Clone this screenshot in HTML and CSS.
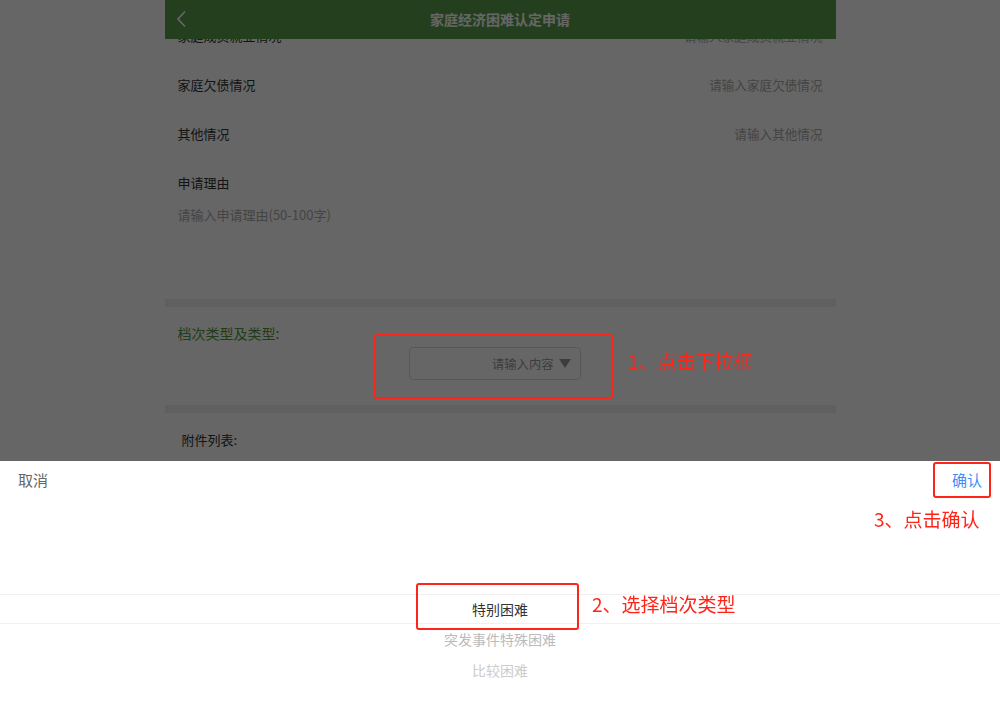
FILE: index.html
```html
<!DOCTYPE html>
<html lang="zh-CN">
<head>
  <meta charset="UTF-8" />
  <meta name="viewport" content="width=device-width, initial-scale=1.0">
  <title>家庭经济困难认定申请</title>
  <link rel="stylesheet" href="styles.css">
</head>
<body>
  <div class="page">
    <!-- 顶部导航 -->
    <div class="nav-bar">
      <svg class="nav-back" width="12" height="18" viewBox="0 0 12 18">
        <polyline points="9,1.5 2,9 9,16.5" fill="none" stroke="#fff" stroke-width="1.6" />
      </svg>
      <span class="nav-title">家庭经济困难认定申请</span>
    </div>

    <!-- 表单内容 (已滚动) -->
    <div class="form">
      <div class="form-row">
        <span class="form-label">家庭成员就业情况</span>
        <span class="form-input">请输入家庭成员就业情况</span>
      </div>
      <div class="form-row">
        <span class="form-label">家庭欠债情况</span>
        <span class="form-input">请输入家庭欠债情况</span>
      </div>
      <div class="form-row">
        <span class="form-label">其他情况</span>
        <span class="form-input">请输入其他情况</span>
      </div>
      <div class="form-area">
        <span class="form-label">申请理由</span>
        <div class="form-textarea">请输入申请理由(50-100字)</div>
      </div>

      <div class="divider"></div>

      <div class="level-section">
        <div class="level-title">档次类型及类型:</div>
        <div class="level-select">
          <div class="select-box">
            <span>请输入内容</span>
            <span class="select-arrow"></span>
          </div>
        </div>
      </div>

      <div class="divider"></div>

      <div class="attach-title">附件列表:</div>
    </div>
  </div>

  <!-- 遮罩 + 底部选择器 -->
  <div class="mask"></div>
  <div class="picker-sheet">
    <div class="picker-head">
      <span class="picker-cancel">取消</span>
      <span class="picker-ok">确认</span>
    </div>
    <div class="picker-list">
      <div class="picker-item selected">特别困难</div>
      <div class="picker-item second">突发事件特殊困难</div>
      <div class="picker-item third">比较困难</div>
    </div>
  </div>

  <!-- 标注 -->
  <div class="mark mark-1"></div>
  <div class="mark-text text-1">1、点击下拉框</div>
  <div class="mark mark-2"></div>
  <div class="mark-text text-2">2、选择档次类型</div>
  <div class="mark mark-3"></div>
  <div class="mark-text text-3">3、点击确认</div>
</body>
</html>
```

FILE: styles.css
```css
* {
  box-sizing: border-box;
}

html, body {
  margin: 0;
  padding: 0;
  height: 100%;
  overflow: hidden;
  background-color: #fff;
  font-family: "Noto Sans CJK SC", "Noto Sans", sans-serif;
  color: #333;
}

.page {
  position: relative;
  width: 671px;
  margin: 0 auto;
  height: 100vh;
  overflow: hidden;
}

/* 顶部导航 */
.nav-bar {
  position: absolute;
  top: 0;
  left: 0;
  right: 0;
  height: 39px;
  background-color: #5a9e4b;
  display: flex;
  align-items: center;
  justify-content: center;
  z-index: 2;
}

.nav-back {
  position: absolute;
  left: 11px;
  top: 10px;
}

.nav-title {
  color: #fff;
  font-size: 14px;
  font-weight: bold;
  margin-top: -2px;
}

/* 表单 */
.form {
  padding-top: 11px;
}

.form-row {
  display: flex;
  justify-content: space-between;
  align-items: center;
  height: 49px;
  padding: 0 13px;
  font-size: 13px;
}

.form-label {
  color: #333;
  font-size: 13px;
}

.form-input {
  color: #aaa;
  font-size: 12.6px;
}

.form-area {
  padding: 11px 13px 0;
  height: 141px;
}

.form-textarea {
  margin-top: 12px;
  font-size: 13px;
  color: #aaa;
}

.divider {
  height: 8px;
  background-color: #f0f0f0;
}

.level-section {
  height: 98px;
  padding: 16px 13px 0;
}

.level-title {
  font-size: 14px;
  color: #4e9a3f;
}

.level-select {
  padding-left: 231px;
  margin-top: 4px;
}

.select-box {
  width: 172px;
  height: 33px;
  border: 1px solid #ddd;
  border-radius: 4px;
  display: flex;
  align-items: center;
  justify-content: flex-end;
  padding-right: 9px;
  font-size: 12.3px;
  color: #999;
}

.select-arrow {
  width: 0;
  height: 0;
  margin-left: 5px;
  border-left: 6px solid transparent;
  border-right: 6px solid transparent;
  border-top: 9px solid #999;
}

.attach-title {
  padding: 17px 17px;
  font-size: 13px;
  color: #333;
}

/* 遮罩 */
.mask {
  position: fixed;
  top: 0;
  left: 0;
  right: 0;
  bottom: 0;
  background: rgba(0, 0, 0, 0.6);
  z-index: 10;
}

/* 底部选择器 */
.picker-sheet {
  position: fixed;
  left: 0;
  right: 0;
  bottom: 0;
  height: 260px;
  background-color: #fff;
  z-index: 11;
}

.picker-head {
  display: flex;
  justify-content: space-between;
  align-items: center;
  height: 36px;
  padding: 0 18px;
  font-size: 15px;
}

.picker-cancel {
  color: #666;
}

.picker-ok {
  color: #3e8ef7;
}

.picker-list {
  padding-top: 97px;
}

.picker-item {
  height: 31px;
  line-height: 31px;
  text-align: center;
  font-size: 14px;
}

.picker-item.selected {
  height: 30px;
  line-height: 28px;
  border-top: 1px solid #f0f0f0;
  border-bottom: 1px solid #f0f0f0;
  color: #333;
}

.picker-item.second {
  color: #bbb;
}

.picker-item.third {
  color: #ccc;
}

/* 标注 */
.mark {
  position: fixed;
  border: 2px solid #ff2418;
  border-radius: 3px;
  z-index: 20;
}

.mark-1 {
  left: 374px;
  top: 334px;
  width: 239px;
  height: 65px;
}

.mark-2 {
  left: 416px;
  top: 583px;
  width: 163px;
  height: 47px;
}

.mark-3 {
  left: 933px;
  top: 462px;
  width: 58px;
  height: 36px;
}

.mark-text {
  position: fixed;
  color: #ff2418;
  font-size: 19px;
  line-height: 24px;
  z-index: 20;
}

.text-1 {
  left: 628px;
  top: 349px;
}

.text-2 {
  left: 592px;
  top: 592px;
}

.text-3 {
  left: 874px;
  top: 507px;
}
```
